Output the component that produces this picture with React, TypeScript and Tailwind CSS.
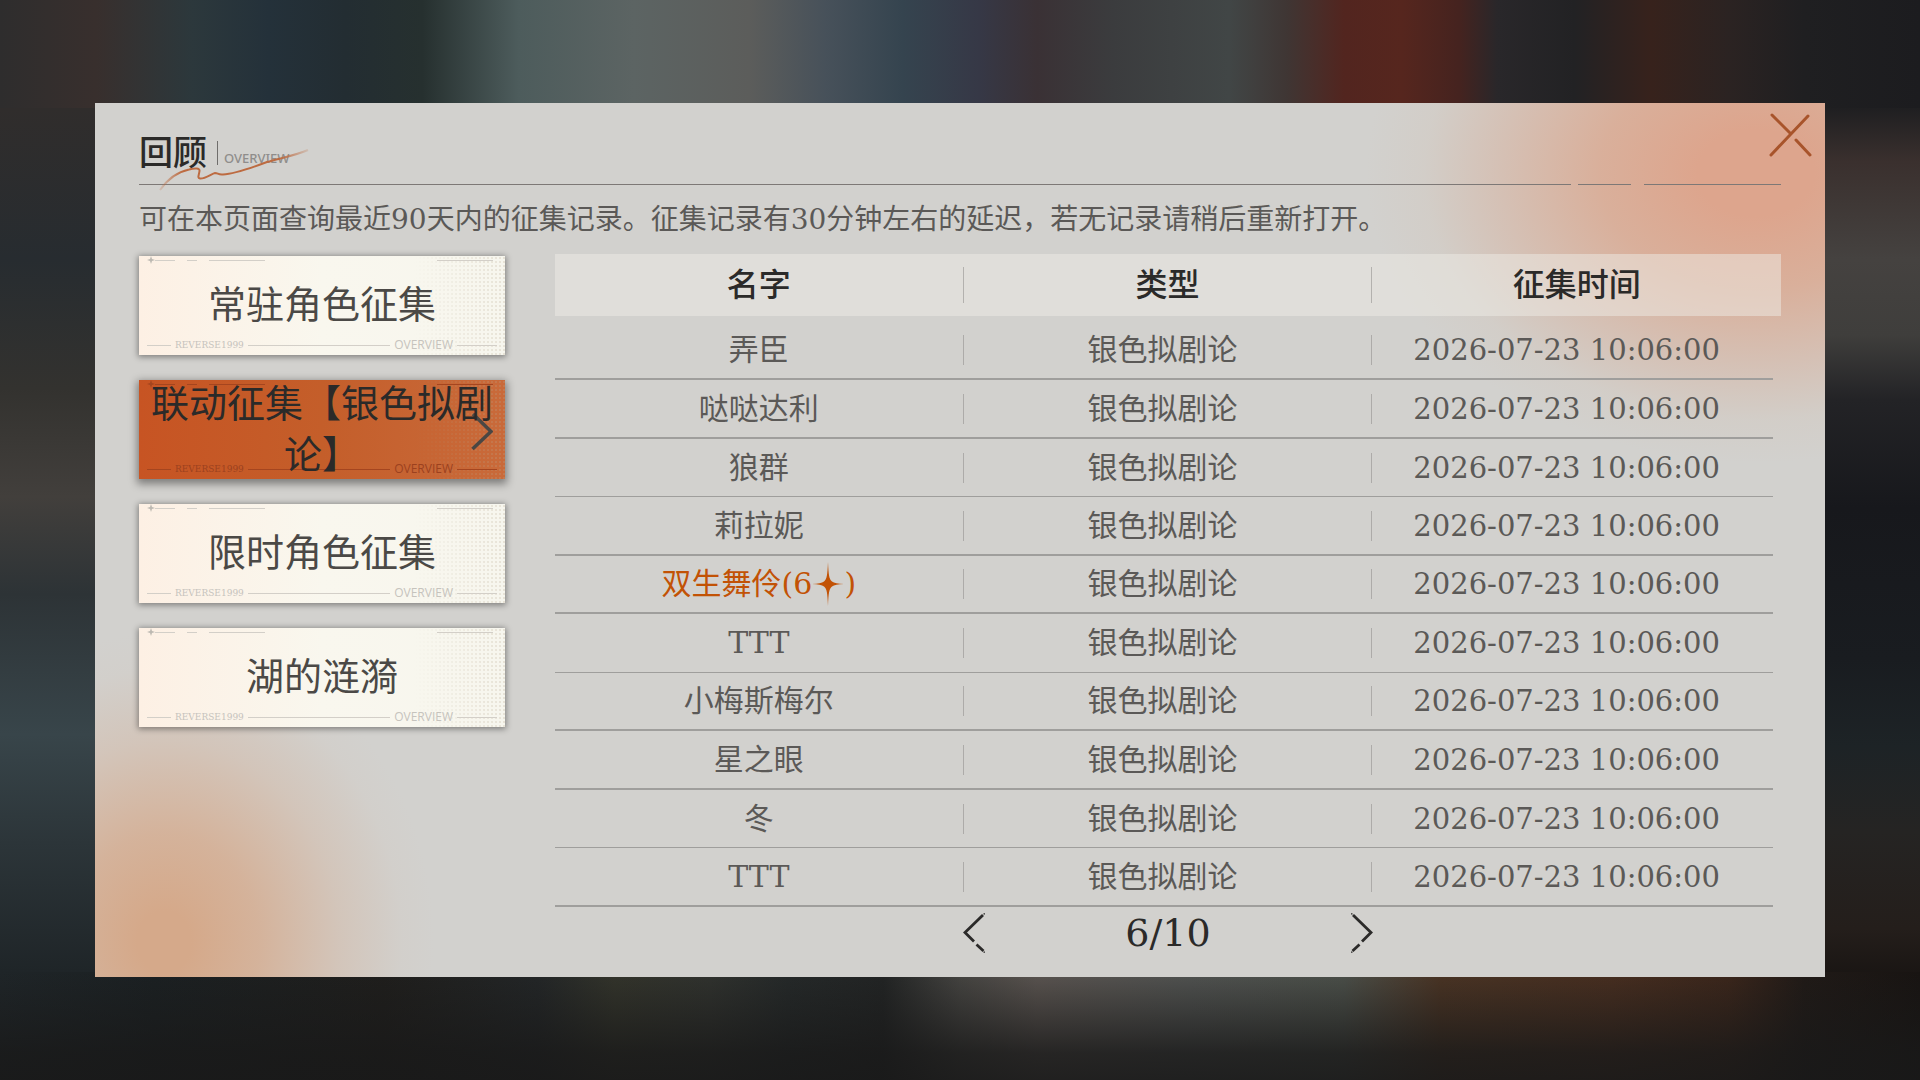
import { useState } from "react";

type Row = { name: string; stars?: number };

const banners = ["常驻角色征集", "联动征集【银色拟剧论】", "限时角色征集", "湖的涟漪"];

const rows: Row[] = [
  { name: "弄臣" },
  { name: "哒哒达利" },
  { name: "狼群" },
  { name: "莉拉妮" },
  { name: "双生舞伶", stars: 6 },
  { name: "TTT" },
  { name: "小梅斯梅尔" },
  { name: "星之眼" },
  { name: "冬" },
  { name: "TTT" },
];

// blurred scene behind the dialog: top band, bottom band, then the two sides
const backdrop =
  "[background:linear-gradient(90deg,#2e2d2d,#382f2d_5%,#2c383c_10%,#24313a_14%,#232d32_18%,#26302f_22%,#4d5c5c_27%,#5c6463_33%,#5c5d5b_39%,#47515a_43%,#35444f_47%,#363846_51%,#3a3135_54%,#3b3c3e_58%,#414646_64%,#3f3634_67%,#52251f_70%,#56261e_73%,#45231f_76%,#29272a_78%,#222224_82%,#37221c_86%,#2b2322_90%,#1f1f21_94%,#1c1c1f)_top/100%_10%_no-repeat,linear-gradient(180deg,transparent,#191919cc_75%,#191919e0)_bottom/100%_10%_no-repeat,linear-gradient(90deg,#1f2528,#1b2022_8%,#1f1e1c_20%,#232627_28%,#33342b_32%,#30322e_37%,#252929_41%,#222424_46%,#454441_50%,#5a5450_54%,#505250_62%,#4b4f49_70%,#4a3424_75%,#472e20_84%,#3b261b_90%,#201a17_94%,#181412)_bottom/100%_10%_no-repeat,linear-gradient(180deg,#2e2d2d,#302d2c_10%,#272c30_24%,#33322f_36%,#423f3c_46%,#2d3336_55%,#38454a_68%,#2c3539_78%,#1f2528_90%)_left/50%_100%_no-repeat,linear-gradient(180deg,#1c1c1f,#1f1f21_10%,#3a302e_15%,#454240_24%,#3f3e3c_31%,#232326_37%,#17181c_47%,#191c20_61%,#1d2326_69%,#252423_77%,#241e1b_86%,#181412_91%)_right/50%_100%_no-repeat]";

const panelGlow =
  "bg-[#d2d1ce] bg-[radial-gradient(ellipse_390px_290px_at_96%_8%,#dda58d_15%,#dba78ecc_40%,#d8af9a80_65%,#d4c0b033_85%,transparent),radial-gradient(ellipse_270px_310px_at_4%_96%,#d5a98a_10%,#d5ab8ecc_35%,#d4b39c66_65%,#d3c4b822_88%,transparent)]";

function Star() {
  return (
    <svg viewBox="0 0 32 44" className="h-11 w-8" fill="currentColor" aria-hidden>
      <path d="M16 0 C16.6 13 17 17 20 19.5 C22 21 26 21.600 32 22 C26 22.400 22 23 20 24.500 C17 27 16.600 31 16 44 C15.400 31 15 27 12 24.500 C10 23 6 22.400 0 22 C6 21.600 10 21 12 19.500 C15 17 15.400 13 16 0Z" />
    </svg>
  );
}

function PageArrow({ flip = false }: { flip?: boolean }) {
  return (
    <svg
      viewBox="0 0 22 40"
      className={`h-10 w-[22px] ${flip ? "-scale-x-100" : ""}`}
      fill="none"
      stroke="#2b2a29"
      strokeWidth="2.8"
      aria-hidden
    >
      <path d="M20 2 L2 19.500 L11 28.500 M13.500 31.500 L20.500 38" />
      <path d="M20.500 0.800 h1.500 M20.500 39.200 h1.500" strokeWidth="1.200" />
    </svg>
  );
}

function Header() {
  return (
    <header>
      <div className="relative flex h-12 items-center">
        <h1 className="text-[34px] font-medium leading-12 text-[#2b2a29]">回顾</h1>
        <span className="ml-2.5 h-6 w-px bg-[#6f6d6b]" />
        <span className="ml-1.5 mt-2.5 font-['Noto_Sans',sans-serif] text-[13px] font-medium leading-4 text-[#8f8d8b]">
          OVERVIEW
        </span>
        <svg viewBox="0 0 150 42" className="absolute left-5 top-5 h-[42px] w-[150px]" fill="none" aria-hidden>
          <defs>
            <linearGradient id="stroke" x1="0" x2="1">
              <stop offset="0" stopColor="#bd6b41" stopOpacity="0.2" />
              <stop offset="0.15" stopColor="#bd6b41" />
              <stop offset="0.8" stopColor="#bd6b41" />
              <stop offset="1" stopColor="#bd6b41" stopOpacity="0.2" />
            </linearGradient>
          </defs>
          <path
            d="M1 41 C8 31 18 23 30 20.500 C36 19 41 19 40.500 22 C40 26 38 29 41 29.500 C46 30 53 24.500 56 24 C59 24 59 26 64 25.500 C75 25 92 19 108 13 C122 9 138 6 149 1"
            stroke="url(#stroke)"
            strokeWidth="2"
          />
        </svg>
      </div>
      <div className="mt-[7px] flex h-px">
        <span className="flex-1 bg-[#7d7876]" />
        <span className="ml-[7px] w-[53px] bg-[#7d7876]" />
        <span className="ml-[13px] w-[137px] bg-[#7d7876]" />
      </div>
    </header>
  );
}

function BannerButton({ label, active, onClick }: { label: string; active: boolean; onClick: () => void }) {
  const line = active ? "bg-[#a5451f]" : "bg-[#d3cfc8]";
  return (
    <button
      type="button"
      onClick={onClick}
      aria-pressed={active}
      className={`relative flex h-[99px] w-full items-center justify-center px-2 text-center text-[38px] leading-[51px] ${
        active
          ? "bg-linear-to-r from-[#c75423] via-[#c45e2a] to-[#c96a3a] text-[#2b2a29] shadow-[0_3px_8px_2px_#00000066]"
          : "bg-linear-to-r from-[#fdf0e4] via-[#f9f7ee] to-[#f7f6ee] text-[#4b4946] shadow-[0_1px_6px_1px_#00000066]"
      }`}
    >
      <span className="absolute inset-y-0 right-0 w-1/4 bg-[radial-gradient(#b8a99040_1px,transparent_1px)] bg-size-[4px_4px] mask-l-from-0%" />
      <span className="absolute inset-x-2 top-0 flex items-center">
        <svg viewBox="0 0 8 8" className={`size-2 ${active ? "text-[#a5451f]" : "text-[#bdb9b2]"}`} aria-hidden>
          <path d="M4 0 L5 3 L8 4 L5 5 L4 8 L3 5 L0 4 L3 3Z" fill="currentColor" />
        </svg>
        <span className={`h-px w-5 ${line}`} />
        <span className={`ml-3 h-px w-2.5 ${line}`} />
        <span className={`ml-3 h-px w-14 ${line}`} />
        <span className={`mr-1 ml-auto h-px w-14 ${line}`} />
      </span>
      <span
        className={`absolute inset-x-2 bottom-0.5 flex items-center gap-1 leading-4 ${
          active ? "text-[#9b411f]" : "text-[#c6c3bd]"
        }`}
      >
        <span className={`h-px w-6 ${line}`} />
        <span className="font-['DejaVu_Serif',serif] text-[9px]">REVERSE1999</span>
        <span className={`h-px flex-1 ${line}`} />
        <span className="font-['Open_Sans',sans-serif] text-xs">OVERVIEW</span>
        <span className={`h-px w-10 ${line}`} />
      </span>
      {active ? (
        <svg viewBox="0 0 22 38" className="absolute right-3 bottom-7 h-[38px] w-[22px]" fill="none" aria-hidden>
          <path d="M2 1 L20 18.500 L1.500 36" stroke="#4a4744" strokeWidth="3.500" />
        </svg>
      ) : null}
      <span className="relative">{label}</span>
    </button>
  );
}

function RecordTable() {
  return (
    <table className="w-full table-fixed border-separate border-spacing-0 text-[#5b5957]">
      <colgroup>
        <col className="w-1/3" />
        <col className="w-1/3" />
        <col />
        <col className="w-2" />
      </colgroup>
      <thead>
        <tr className="h-[62px] text-[32px] leading-10 text-[#2b2a29]">
          {["名字", "类型", "征集时间"].map((title, i) => (
            <th key={title} colSpan={i === 2 ? 2 : 1} scope="col" className="bg-[#eeece6]/50 p-0 font-medium">
              <div className="flex items-center">
                <span className="flex-1">{title}</span>
                {i < 2 ? <span className="h-9 w-px bg-[#b3b1ae]" /> : null}
              </div>
            </th>
          ))}
        </tr>
        <tr className="h-1.5" aria-hidden />
      </thead>
      <tbody>
        {rows.map((row, i) => (
          <tr
            key={i}
            className="h-[58px] text-[30px] leading-10 even:h-[59px] [&>td]:border-b-2 [&>td]:border-[#9f9e9c] [&>td]:p-0 nth-[3n]:[&>td]:border-b"
          >
            <td>
              <div className="flex items-center">
                {row.stars ? (
                  <span className="flex h-10 flex-1 items-center justify-center text-[#c25205]">
                    {row.name}({row.stars}
                    <Star />)
                  </span>
                ) : (
                  <span className="flex-1 text-center">{row.name}</span>
                )}
                <span className="h-[30px] w-px bg-[#adaba9]" />
              </div>
            </td>
            <td>
              <div className="flex items-center">
                <span className="flex-1 pr-2.5 text-center">银色拟剧论</span>
                <span className="h-[30px] w-px bg-[#adaba9]" />
              </div>
            </td>
            <td>
              <div className="pr-3 text-center text-[29px]">2026-07-23 10:06:00</div>
            </td>
          </tr>
        ))}
      </tbody>
    </table>
  );
}

export default function App() {
  const [active, setActive] = useState(1);
  const [page, setPage] = useState(6);

  return (
    <div
      className={`flex min-h-screen items-center px-[95px] py-10 font-['DejaVu_Serif','Noto_Sans_CJK_SC',serif] ${backdrop}`}
    >
      <main className={`relative min-h-[874px] w-full pt-[26px] pr-11 pb-6 pl-11 ${panelGlow}`}>
        <button type="button" aria-label="关闭" className="absolute top-2 right-3 size-12">
          <svg viewBox="0 0 48 48" className="size-12" fill="none" stroke="#a8542b" strokeWidth="3" strokeLinecap="round" aria-hidden>
            <path d="M7 4 L25 22 M31 29 L45 44 M43 5 L6 44" />
          </svg>
        </button>

        <Header />
        <p className="mt-[13px] text-[28px] leading-11 text-[#5b5957]">
          可在本页面查询最近90天内的征集记录。征集记录有30分钟左右的延迟，若无记录请稍后重新打开。
        </p>

        <div className="mt-3 flex gap-[50px]">
          <nav className="mt-0.5 flex w-[366px] shrink-0 flex-col gap-[25px]">
            {banners.map((label, i) => (
              <BannerButton key={label} label={label} active={i === active} onClick={() => setActive(i)} />
            ))}
          </nav>

          <section className="min-w-0 flex-1">
            <RecordTable />
            <div className="mx-[33.3%] mt-1.5 flex items-center justify-between">
              <button type="button" aria-label="上一页" onClick={() => setPage((p) => Math.max(1, p - 1))}>
                <PageArrow />
              </button>
              <span className="text-[38px] leading-10 text-[#2b2a29]">{page}/10</span>
              <button type="button" aria-label="下一页" onClick={() => setPage((p) => Math.min(10, p + 1))}>
                <PageArrow flip />
              </button>
            </div>
          </section>
        </div>
      </main>
    </div>
  );
}
